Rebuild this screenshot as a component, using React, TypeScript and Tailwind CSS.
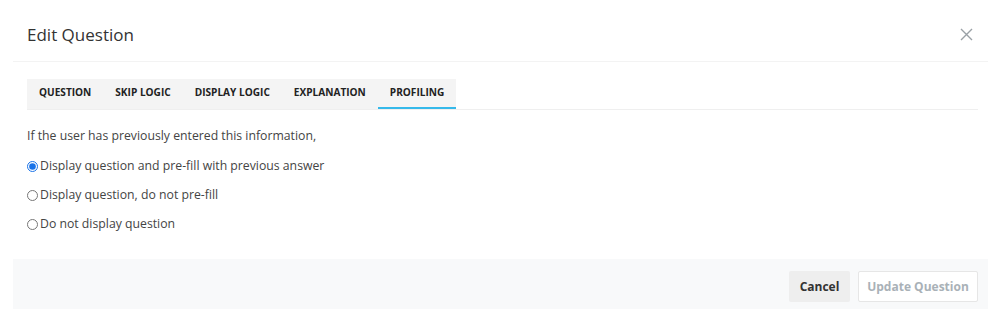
import React, { useState } from 'react';

const tabs = ['Question', 'Skip Logic', 'Display Logic', 'Explanation', 'Profiling'];

const options = [
  'Display question and pre-fill with previous answer',
  'Display question, do not pre-fill',
  'Do not display question',
];

export default function App() {
  const [active] = useState('Profiling');
  const [choice, setChoice] = useState(0);

  return (
    <div className="w-[999px] h-[326px] bg-white font-['Open_Sans',sans-serif] text-[#333]">
      <div className="w-[975px] ml-[13px]">
        {/* Header */}
        <div className="h-[62px] flex items-center justify-between pt-[8px] pl-[14px] pr-[15px] border-b border-[#f3f3f3]">
          <h2 className="text-[17px] text-[#333] leading-none">Edit Question</h2>
          <button className="w-[14px] h-[14px] flex items-center justify-center text-[#9aa1a6]">
            <svg width="13" height="13" viewBox="0 0 13 13" fill="none" stroke="currentColor" strokeWidth="1.4">
              <path d="M1 1L12 12M12 1L1 12" />
            </svg>
          </button>
        </div>

        {/* Body */}
        <div className="pl-[14px] pr-[10px] pt-[17px]">
          <div className="flex border-b border-[#efefef]">
            <ul className="flex bg-[#f4f4f4]">
              {tabs.map((tab) => (
                <li
                  key={tab}
                  className={`h-[30px] px-3 flex items-center text-[10.1px] font-bold uppercase text-[#222] border-b-2 ${
                    tab === active ? 'border-[#35b9ea]' : 'border-transparent'
                  }`}
                >
                  {tab}
                </li>
              ))}
            </ul>
          </div>

          <p className="mt-[17px] text-[12.25px] text-[#444] leading-[18px]">
            If the user has previously entered this information,
          </p>

          <div className="mt-[12px] flex flex-col gap-[11px]">
            {options.map((opt, i) => (
              <label key={opt} className="flex items-center gap-[2px] text-[12.25px] text-[#444] leading-[18px] cursor-pointer">
                <input
                  type="radio"
                  name="profiling"
                  checked={choice === i}
                  onChange={() => setChoice(i)}
                  className="w-[11px] h-[11px] m-0 accent-[#1a73e8]"
                />
                <span>{opt}</span>
              </label>
            ))}
          </div>
        </div>

        {/* Footer */}
        <div className="mt-[26px] h-[50px] bg-[#f8f9fa] flex justify-end items-start gap-[8px] pt-[12px] pr-[10px]">
          <button className="h-[31px] w-[61px] bg-[#eeeeee] text-[12px] font-bold text-[#333] rounded-[2px]">
            Cancel
          </button>
          <button className="h-[31px] w-[120px] bg-white border border-[#e6e6e6] text-[12px] font-bold text-[#a9b1b7] rounded-[2px]">
            Update Question
          </button>
        </div>
      </div>
    </div>
  );
}
